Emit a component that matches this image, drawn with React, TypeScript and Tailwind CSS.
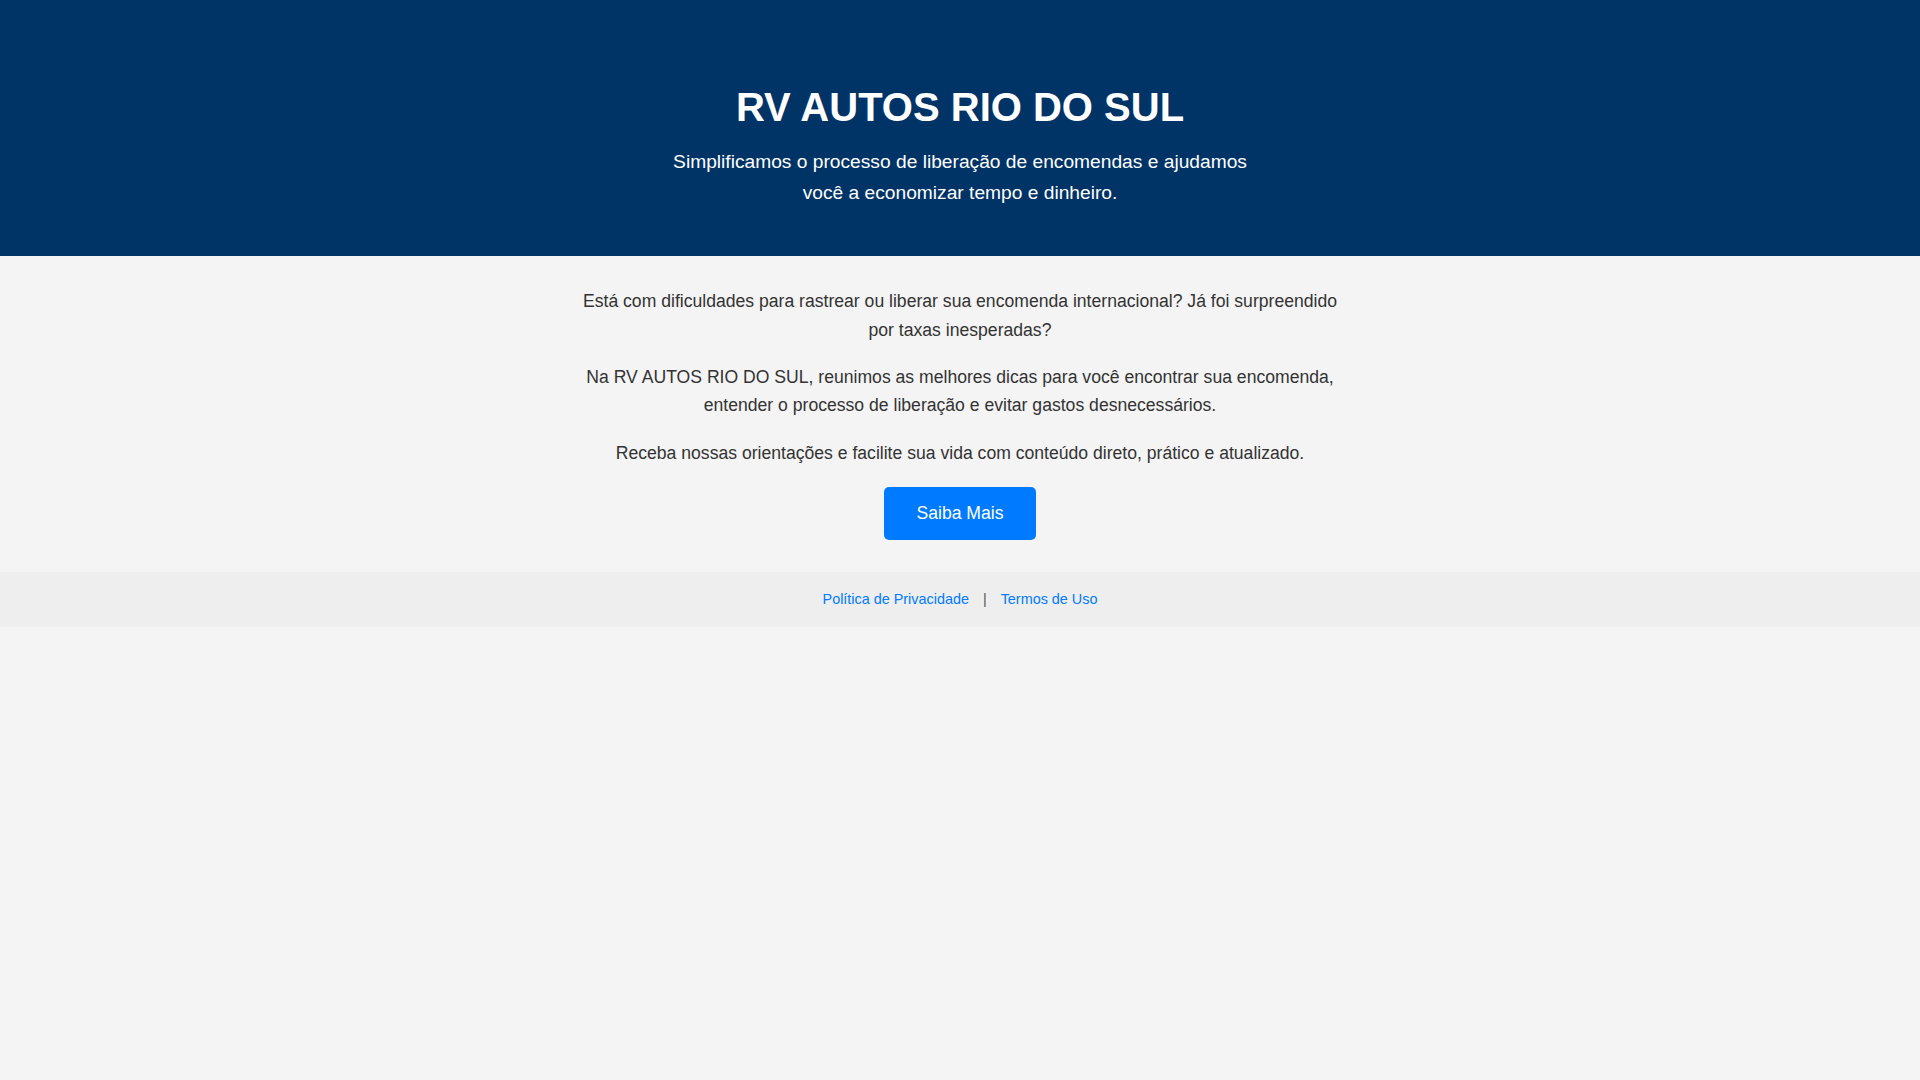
export default function App() {
  return (
    <div className="min-h-screen bg-[#f4f4f4] text-[#333] font-['Liberation_Sans',Arial,sans-serif]">
      <header className="bg-[#003366] px-5 pt-[84px] pb-[48px] text-center text-white">
        <h1 className="text-[40px] font-bold leading-[46px]">RV AUTOS RIO DO SUL</h1>
        <p className="mx-auto mt-[17px] max-w-[600px] text-[19.2px] leading-[30.72px]">
          Simplificamos o processo de liberação de encomendas e ajudamos você a economizar tempo e dinheiro.
        </p>
      </header>

      <main className="mx-auto max-w-[800px] px-5 pt-[31px] pb-[32px] text-center">
        <p className="mb-[19.5px] text-[17.6px] leading-[28.16px]">
          Está com dificuldades para rastrear ou liberar sua encomenda internacional? Já foi surpreendido por taxas
          inesperadas?
        </p>
        <p className="mb-[19.5px] text-[17.6px] leading-[28.16px]">
          Na RV AUTOS RIO DO SUL, reunimos as melhores dicas para você encontrar sua encomenda, entender o processo de
          liberação e evitar gastos desnecessários.
        </p>
        <p className="mb-[19.5px] text-[17.6px] leading-[28.16px]">
          Receba nossas orientações e facilite sua vida com conteúdo direto, prático e atualizado.
        </p>
        <a
          href="#"
          className="inline-block rounded-[5px] bg-[#007bff] px-[32px] py-[12.5px] text-[17.6px] leading-[28.16px] text-white"
        >
          Saiba Mais
        </a>
      </main>

      <footer className="bg-[#eeeeee] py-4 text-center text-[14.4px] leading-[23px] text-[#555]">
        <a href="#" className="text-[#007bff]">
          Política de Privacidade
        </a>
        <span className="mx-[14px]">|</span>
        <a href="#" className="text-[#007bff]">
          Termos de Uso
        </a>
      </footer>
    </div>
  );
}
